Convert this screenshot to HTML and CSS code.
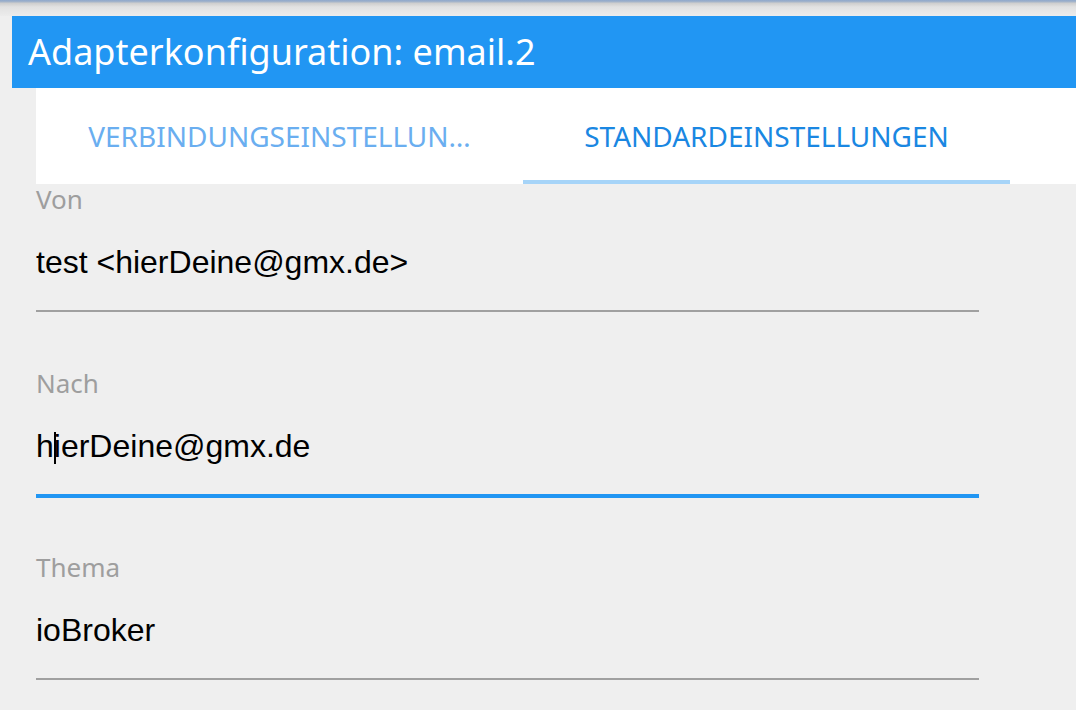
FILE: index.html
```html
<!DOCTYPE html>
<html lang="de">
<head>
<meta charset="utf-8">
<title>Adapterkonfiguration: email.2</title>
<link rel="stylesheet" href="styles.css">
</head>
<body>
<div class="topbar"></div>
<div class="header"><h1 class="title">Adapterkonfiguration: email.2</h1></div>
<div class="tabs">
  <div class="tab">VERBINDUNGSEINSTELLUN…</div>
  <div class="tab active">STANDARDEINSTELLUNGEN</div>
</div>
<div class="form">
  <div class="field">
    <div class="label">Von</div>
    <div class="input">test &lt;hierDeine@gmx.de&gt;</div>
  </div>
  <div class="field">
    <div class="label">Nach</div>
    <div class="input focused">h<span class="caret"></span>ierDeine@gmx.de</div>
  </div>
  <div class="field">
    <div class="label">Thema</div>
    <div class="input">ioBroker</div>
  </div>
</div>
</body>
</html>
```
FILE: styles.css
```css
html, body {
  margin: 0;
  padding: 0;
  background: #efefef;
  overflow: hidden;
}
body {
  width: 1076px;
  height: 710px;
  font-family: "Noto Sans", "DejaVu Sans", sans-serif;
}
.topbar {
  height: 16px;
  background: linear-gradient(#8ea8cc 0px, #a7b6ca 2px, #cdcdcd 3px, #e2e2e2 7px, #ececec 16px);
}
.header {
  margin-left: 12px;
  height: 72px;
  background: #2196f3;
  display: flex;
  align-items: center;
  padding-left: 16px;
}
.title {
  margin: 0;
  font-weight: normal;
  font-size: 36px;
  color: #fff;
  line-height: 1;
}
.tabs {
  margin-left: 36px;
  height: 96px;
  background: #fff;
  display: flex;
}
.tab {
  width: 487px;
  box-sizing: border-box;
  display: flex;
  align-items: center;
  justify-content: center;
  font-size: 28px;
  color: #6aaef0;
  border-bottom: 4px solid transparent;
  padding-top: 4px;
}
.tab.active {
  color: #1a87e2;
  border-bottom-color: #a6d4f8;
}
.form {
  margin-left: 36px;
  width: 943px;
}
.field {
  height: 184px;
}
.label {
  font-size: 26px;
  color: #9e9e9e;
  line-height: 30px;
  padding-bottom: 6px;
}
.input {
  height: 92px;
  box-sizing: border-box;
  border-bottom: 2px solid #a0a0a0;
  font-family: "Liberation Sans", Arial, sans-serif;
  font-size: 32px;
  color: #000;
  padding-top: 24px;
  line-height: 36px;
}
.input.focused {
  border-bottom: 4px solid #2196f3;
  height: 94px;
}
.caret {
  display: inline-block;
  width: 2px;
  height: 32px;
  background: #000;
  vertical-align: -7px;
  margin-right: -2px;
}
```
